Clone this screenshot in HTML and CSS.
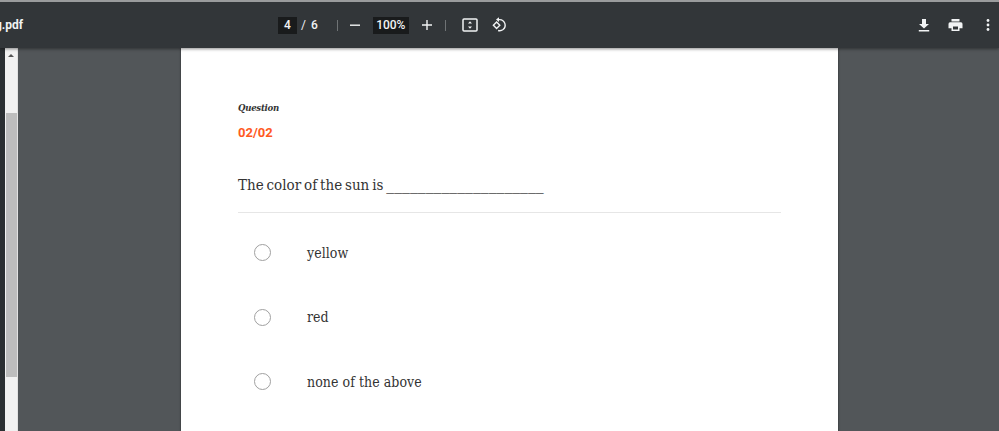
FILE: index.html
```html
<!DOCTYPE html>
<html lang="en">
<head>
<meta charset="utf-8">
<title>g.pdf</title>
<link rel="stylesheet" href="styles.css">
</head>
<body>
<div class="app">
  <header class="toolbar">
    <div class="title">g.pdf</div>
    <div class="controls">
      <span class="field page-field">4</span>
      <span class="slash">/</span>
      <span class="total">6</span>
      <span class="sep sep-a"></span>
      <svg class="icon minus" width="12" height="12" viewBox="0 0 12 12"><rect x="1" y="5.5" width="10" height="1.4" fill="#f1f3f4"/></svg>
      <span class="field zoom-field">100%</span>
      <svg class="icon plus" width="12" height="12" viewBox="0 0 12 12"><path d="M1 6h10M6 1v10" stroke="#f1f3f4" stroke-width="1.4" fill="none"/></svg>
      <span class="sep sep-b"></span>
      <svg class="icon fit" width="16" height="14" viewBox="0 0 16 14"><rect x="1" y="1" width="14" height="12" rx="1" fill="none" stroke="#f1f3f4" stroke-width="1.5"/><path d="M8 3.3l2 2.2H6zM8 10.7l2-2.2H6z" fill="#f1f3f4"/></svg>
      <svg class="icon rotate" width="16" height="16" viewBox="0 0 16 16"><path d="M5.4 8.6l3.2-3.2 3.2 3.2-3.2 3.2z" transform="translate(-3 -.4)" fill="none" stroke="#f1f3f4" stroke-width="1.4"/><path d="M6.5 2.6h2.2a5.6 5.6 0 0 1 3.4 9.9 5.6 5.6 0 0 1-5 1" fill="none" stroke="#f1f3f4" stroke-width="1.4"/><path d="M8 .2v4.8L5 2.6z" fill="#f1f3f4"/></svg>
    </div>
    <div class="actions">
      <svg class="icon action-download" width="12" height="14" viewBox="0 0 12 14"><path d="M4 1h4v5h3L6 10.500 1 6h3zM.8 12h10.400v1.400H.8z" fill="#f1f3f4"/></svg>
      <svg class="icon action-print" width="15" height="14" viewBox="0 0 15 14"><path d="M3.500 1h8v2.500h-8zM2 4.300h11a1.600 1.600 0 0 1 1.500 1.600v4.300h-3V13h-8v-2.800H.5V5.900A1.600 1.600 0 0 1 2 4.300zM5 8.500V11.500h5V8.500z" fill="#f1f3f4" fill-rule="evenodd"/></svg>
      <svg class="icon action-more" width="4" height="14" viewBox="0 0 4 14"><circle cx="2" cy="2.500" r="1.400" fill="#f1f3f4"/><circle cx="2" cy="7" r="1.400" fill="#f1f3f4"/><circle cx="2" cy="11.500" r="1.400" fill="#f1f3f4"/></svg>
    </div>
  </header>
  <div class="content">
    <div class="gutter"></div>
    <div class="scrollbar">
      <div class="arrow"></div>
      <div class="thumb"></div>
    </div>
    <main class="viewer">
      <article class="page">
        <p class="label">Question</p>
        <p class="count">02/02</p>
        <h1 class="question">The color of the sun is <span class="blank">____________________</span></h1>
        <hr class="rule">
        <ul class="options">
          <li class="option"><span class="radio"></span><span class="option-text">yellow</span></li>
          <li class="option"><span class="radio"></span><span class="option-text">red</span></li>
          <li class="option"><span class="radio"></span><span class="option-text">none of the above</span></li>
        </ul>
      </article>
    </main>
  </div>
</div>
</body>
</html>
```

FILE: styles.css
```css
* { box-sizing: border-box; }
html, body { margin: 0; height: 100%; overflow: hidden; }
.app { width: 999px; height: 431px; display: flex; flex-direction: column; background: #525659; }
.toolbar {
  flex: 0 0 48px;
  border-top: 2px solid #9a9c9d;
  background: #323639;
  display: flex;
  align-items: center;
  padding: 0 9.5px 0 3px;
  color: #f1f3f4;
  font-family: Roboto, "Liberation Sans", sans-serif;
  font-size: 12px;
  box-shadow: 0 1px 3px rgba(0,0,0,.45);
  position: relative;
  z-index: 2;
}
.title { width: 283px; margin-left: -8px; font-weight: 700; font-size: 12px; white-space: nowrap; }
.controls { display: flex; align-items: center; flex: 1; }
.field { background: #191b1c; height: 17px; line-height: 17px; text-align: center; font-weight: 500; }
.page-field { width: 19px; }
.slash { margin-left: 4px; }
.total { margin-left: 5px; font-weight: 500; }
.sep { width: 1px; height: 11px; background: #6f7375; }
.sep-a { margin-left: 19px; }
.minus { margin-left: 11px; }
.zoom-field { width: 36px; margin-left: 12px; }
.plus { margin-left: 12px; }
.sep-b { margin-left: 12px; }
.fit { margin-left: 16px; }
.rotate { margin-left: 13px; }
.icon { display: block; flex: none; }
.actions { display: flex; align-items: center; }
.action-print { margin-left: 18.5px; }
.action-more { margin-left: 22.5px; }
.content { flex: 1; display: flex; min-height: 0; }
.gutter { width: 5px; background: #2b2f32; }
.scrollbar { width: 13px; background: #f1f1f1; display: flex; flex-direction: column; align-items: center; border-right: 1px solid #e2e2e2; }
.arrow { margin-top: 6px; width: 0; height: 0; border-left: 3px solid transparent; border-right: 3px solid transparent; border-bottom: 3px solid #555; }
.thumb { width: 11px; height: 264px; margin-top: 56px; background: #bdbdbd; align-self: flex-start; margin-left: 1px; }
.viewer { flex: 1; overflow: hidden; padding-left: 163px; }
.page {
  width: 657px;
  height: 500px;
  background: #fff;
  box-shadow: 0 0 2px rgba(0,0,0,.55);
  padding: 53px 57px 0;
  font-family: "DejaVu Serif Condensed", "DejaVu Serif", "Liberation Serif", serif;
  color: #333;
}
.label { margin: 0; font-size: 9.5px; line-height: 14px; letter-spacing: -.25px; font-style: italic; font-weight: 700; color: #333; }
.count { margin: 9px 0 0; font-family: Roboto, "Liberation Sans", sans-serif; font-size: 13px; line-height: 18px; font-weight: 700; color: #ff5a1f; }
.question { margin: 30px 0 0; font-size: 15px; line-height: 24px; font-weight: 400; word-spacing: -1.4px; white-space: nowrap; }
.blank { font-size: 17.5px; }
.rule { margin: 15px 0 0; border: 0; height: 1px; width: 543px; background: #e6e6e6; }
.options { list-style: none; margin: 7.3px 0 0; padding: 0 0 0 16px; }
.option { height: 64.600px; display: flex; align-items: center; }
.radio { width: 17px; height: 17px; border: 1.500px solid #a0a0a0; border-radius: 50%; flex: none; }
.option-text { margin-left: 36px; font-size: 14px; letter-spacing: .05px; color: #333; }
```
